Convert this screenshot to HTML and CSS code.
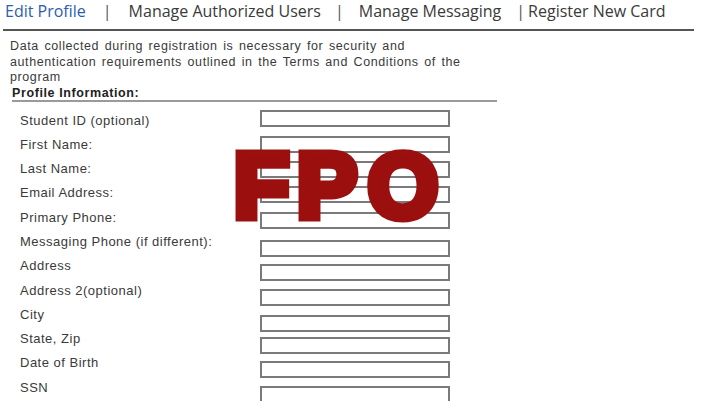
FILE: index.html
```html
<!DOCTYPE html>
<html>
<head>
<meta charset="utf-8">
<link rel="stylesheet" href="styles.css">
</head>
<body>
<nav class="tabs">
  <a class="tab active">Edit Profile</a>
  <span class="sep sep1">|</span>
  <a class="tab">Manage Authorized Users</a>
  <span class="sep sep2">|</span>
  <a class="tab">Manage Messaging</a>
  <span class="sep sep3">|</span>
  <a class="tab">Register New Card</a>
</nav>
<main class="content">
  <p class="intro">Data collected during registration is necessary for security and<br>authentication requirements outlined in the Terms and Conditions of the<br>program</p>
  <h2 class="section-title">Profile Information:</h2>
  <div class="form">
    <div class="labels">
      <div>Student ID (optional)</div>
      <div>First Name:</div>
      <div>Last Name:</div>
      <div>Email Address:</div>
      <div>Primary Phone:</div>
      <div>Messaging Phone (if different):</div>
      <div>Address</div>
      <div>Address 2(optional)</div>
      <div>City</div>
      <div>State, Zip</div>
      <div>Date of Birth</div>
      <div>SSN</div>
    </div>
    <div class="fields">
      <div class="box b1"></div>
      <div class="box b2"></div>
      <div class="box b3"></div>
      <div class="box b4"></div>
      <div class="box b5"></div>
      <div class="box b6"></div>
      <div class="box b7"></div>
      <div class="box b8"></div>
      <div class="box b9"></div>
      <div class="box b10"></div>
      <div class="box b11"></div>
      <div class="box b12"></div>
    </div>
  </div>
  <div class="fpo"><span class="f">F</span><span class="p">P</span><span class="o">O</span></div>
</main>
</body>
</html>
```
FILE: styles.css
```css
html, body {
  margin: 0;
  padding: 0;
  background: #fff;
  overflow: hidden;
}
body {
  width: 716px;
  height: 401px;
  position: relative;
}
.tabs {
  display: flex;
  align-items: baseline;
  margin-left: 3px;
  width: 691px;
  height: 31px;
  box-sizing: border-box;
  padding-left: 2px;
  border-bottom: 2px solid #555;
  font-family: "Open Sans", sans-serif;
  font-size: 16px;
  line-height: 22px;
  color: #3a3a3a;
}
.tab {
  white-space: nowrap;
}
.tab.active {
  color: #2d5cb0;
}
.sep {
  color: #555;
}
.sep1 { margin: 0 17px 0 17px; }
.sep2 { margin: 0 15px 0 14px; }
.sep3 { margin: 0 3px 0 15px; }
.content {
  padding: 8px 0 0 10px;
  font-family: "Liberation Sans", Arial, sans-serif;
  color: #333;
}
.intro {
  margin: 0;
  font-size: 12.5px;
  line-height: 15.5px;
  letter-spacing: 0.6px;
  word-spacing: 1.5px;
  color: #3a3a3a;
}
.section-title {
  margin: 0 0 0 2px;
  width: 485px;
  font-size: 12.5px;
  line-height: 14px;
  font-weight: bold;
  letter-spacing: 0.6px;
  color: #222;
  border-bottom: 2px solid #9a9a9a;
  padding-bottom: 0;
}
.form {
  display: flex;
  margin-top: 8px;
}
.labels {
  width: 240px;
  padding-left: 10px;
  font-size: 13px;
  line-height: 24.3px;
  letter-spacing: 0.5px;
  color: #3a3a3a;
  margin-top: -1px;
}
.fields {
  display: flex;
  flex-direction: column;
}
.box {
  width: 190px;
  height: 17px;
  box-sizing: border-box;
  border: 2px solid #7a7a7a;
}
.b2 { margin-top: 9px; }
.b3 { margin-top: 8px; }
.b4 { margin-top: 8px; }
.b5 { margin-top: 9px; }
.b6 { margin-top: 11px; }
.b7 { margin-top: 7px; }
.b8 { margin-top: 8px; }
.b9 { margin-top: 9px; }
.b10 { margin-top: 5px; }
.b11 { margin-top: 7px; }
.b12 { margin-top: 8px; }
.fpo {
  position: absolute;
  left: 234px;
  top: 141px;
  display: flex;
  font-family: "Liberation Sans", Arial, sans-serif;
  font-weight: bold;
  font-size: 90px;
  line-height: 90px;
  color: #9b0f0f;
  -webkit-text-stroke: 9px #9b0f0f;
}
.fpo .p { margin-left: 8px; }
.fpo .o { margin-left: 11px; }
```
